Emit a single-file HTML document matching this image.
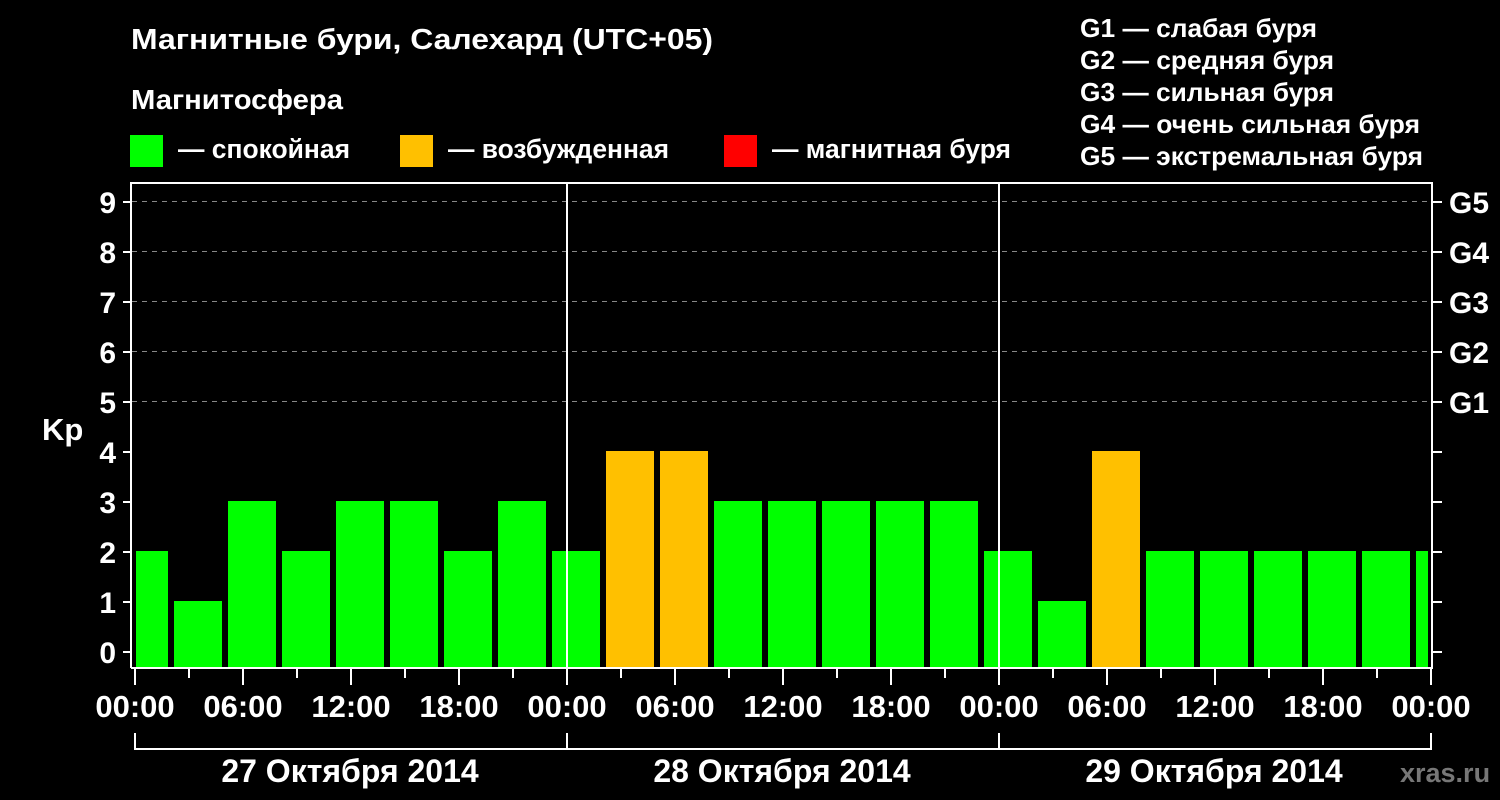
<!DOCTYPE html>
<html><head><meta charset="utf-8"><style>
html,body{margin:0;padding:0;background:#000;width:1500px;height:800px;overflow:hidden}
svg{display:block}
text{font-family:"Liberation Sans",Arial,sans-serif;font-weight:bold;fill:#fff}
</style></head><body>
<svg width="1500" height="800" xmlns="http://www.w3.org/2000/svg">
<rect width="1500" height="800" fill="#000"/>
<text x="131" y="49" font-size="29" textLength="582" lengthAdjust="spacingAndGlyphs">Магнитные бури, Салехард (UTC+05)</text>
<text x="131" y="109" font-size="28" textLength="212" lengthAdjust="spacingAndGlyphs">Магнитосфера</text>
<rect x="130" y="135" width="33" height="32" fill="#00ff00"/>
<text x="178" y="158" font-size="27" textLength="172" lengthAdjust="spacingAndGlyphs">— спокойная</text>
<rect x="400" y="135" width="33" height="32" fill="#ffc000"/>
<text x="448" y="158" font-size="27" textLength="221" lengthAdjust="spacingAndGlyphs">— возбужденная</text>
<rect x="724" y="135" width="33" height="32" fill="#ff0000"/>
<text x="772" y="158" font-size="27" textLength="239" lengthAdjust="spacingAndGlyphs">— магнитная буря</text>
<g font-size="26">
<text x="1080" y="37" textLength="237" lengthAdjust="spacingAndGlyphs">G1 — слабая буря</text>
<text x="1080" y="69" textLength="254" lengthAdjust="spacingAndGlyphs">G2 — средняя буря</text>
<text x="1080" y="101" textLength="254" lengthAdjust="spacingAndGlyphs">G3 — сильная буря</text>
<text x="1080" y="133" textLength="340" lengthAdjust="spacingAndGlyphs">G4 — очень сильная буря</text>
<text x="1080" y="165" textLength="343" lengthAdjust="spacingAndGlyphs">G5 — экстремальная буря</text>
</g>
<g stroke="#888" stroke-width="1" stroke-dasharray="5,5">
<line x1="132" y1="201.5" x2="1432" y2="201.5"/>
<line x1="132" y1="251.5" x2="1432" y2="251.5"/>
<line x1="132" y1="301.5" x2="1432" y2="301.5"/>
<line x1="132" y1="351.5" x2="1432" y2="351.5"/>
<line x1="132" y1="401.5" x2="1432" y2="401.5"/>
</g>
<g fill="#00ff00">
<rect x="136" y="551" width="32" height="116"/>
<rect x="174" y="601" width="48" height="66"/>
<rect x="228" y="501" width="48" height="166"/>
<rect x="282" y="551" width="48" height="116"/>
<rect x="336" y="501" width="48" height="166"/>
<rect x="390" y="501" width="48" height="166"/>
<rect x="444" y="551" width="48" height="116"/>
<rect x="498" y="501" width="48" height="166"/>
<rect x="552" y="551" width="48" height="116"/>
<rect x="714" y="501" width="48" height="166"/>
<rect x="768" y="501" width="48" height="166"/>
<rect x="822" y="501" width="48" height="166"/>
<rect x="876" y="501" width="48" height="166"/>
<rect x="930" y="501" width="48" height="166"/>
<rect x="984" y="551" width="48" height="116"/>
<rect x="1038" y="601" width="48" height="66"/>
<rect x="1146" y="551" width="48" height="116"/>
<rect x="1200" y="551" width="48" height="116"/>
<rect x="1254" y="551" width="48" height="116"/>
<rect x="1308" y="551" width="48" height="116"/>
<rect x="1362" y="551" width="48" height="116"/>
<rect x="1416" y="551" width="12" height="116"/>
</g>
<g fill="#ffc000">
<rect x="606" y="451" width="48" height="216"/>
<rect x="660" y="451" width="48" height="216"/>
<rect x="1092" y="451" width="48" height="216"/>
</g>
<g stroke="#fff" stroke-width="2" fill="none">
<path d="M131 668 V183 H1432 V668 H131"/>
<line x1="567" y1="183" x2="567" y2="668"/>
<line x1="999" y1="183" x2="999" y2="668"/>
<path d="M135 733 V749 H1431 V733 M567 733 V749 M999 733 V749"/>
<path d="M123 652H131M123 602H131M123 552H131M123 502H131M123 452H131M123 402H131M123 352H131M123 302H131M123 252H131M123 202H131"/>
<path d="M1432 652H1442M1432 602H1442M1432 552H1442M1432 502H1442M1432 452H1442M1432 402H1442M1432 352H1442M1432 302H1442M1432 252H1442M1432 202H1442"/>
<path d="M135 669V685M189 669V678M243 669V685M297 669V678M351 669V685M405 669V678M459 669V685M513 669V678M567 669V685M621 669V678M675 669V685M729 669V678M783 669V685M837 669V678M891 669V685M945 669V678M999 669V685M1053 669V678M1107 669V685M1161 669V678M1215 669V685M1269 669V678M1323 669V685M1377 669V678M1431 669V685"/>
</g>
<g font-size="30" text-anchor="end">
<text x="116" y="663">0</text><text x="116" y="613">1</text><text x="116" y="563">2</text>
<text x="116" y="513">3</text><text x="116" y="463">4</text><text x="116" y="413">5</text>
<text x="116" y="363">6</text><text x="116" y="313">7</text><text x="116" y="263">8</text>
<text x="116" y="213">9</text>
</g>
<g font-size="30">
<text x="1449" y="413">G1</text><text x="1449" y="363">G2</text><text x="1449" y="313">G3</text>
<text x="1449" y="263">G4</text><text x="1449" y="213">G5</text>
</g>
<g font-size="31" text-anchor="middle">
<text x="135" y="717">00:00</text><text x="243" y="717">06:00</text><text x="351" y="717">12:00</text>
<text x="459" y="717">18:00</text><text x="567" y="717">00:00</text><text x="675" y="717">06:00</text>
<text x="783" y="717">12:00</text><text x="891" y="717">18:00</text><text x="999" y="717">00:00</text>
<text x="1107" y="717">06:00</text><text x="1215" y="717">12:00</text><text x="1323" y="717">18:00</text>
<text x="1431" y="717">00:00</text>
</g>
<text x="42" y="440" font-size="31">Kp</text>
<g font-size="32" text-anchor="middle">
<text x="350" y="782">27 Октября 2014</text>
<text x="782" y="782">28 Октября 2014</text>
<text x="1214" y="782">29 Октября 2014</text>
</g>
<text x="1400" y="782" font-size="27" style="fill:#777">xras.ru</text>
</svg>
</body></html>
